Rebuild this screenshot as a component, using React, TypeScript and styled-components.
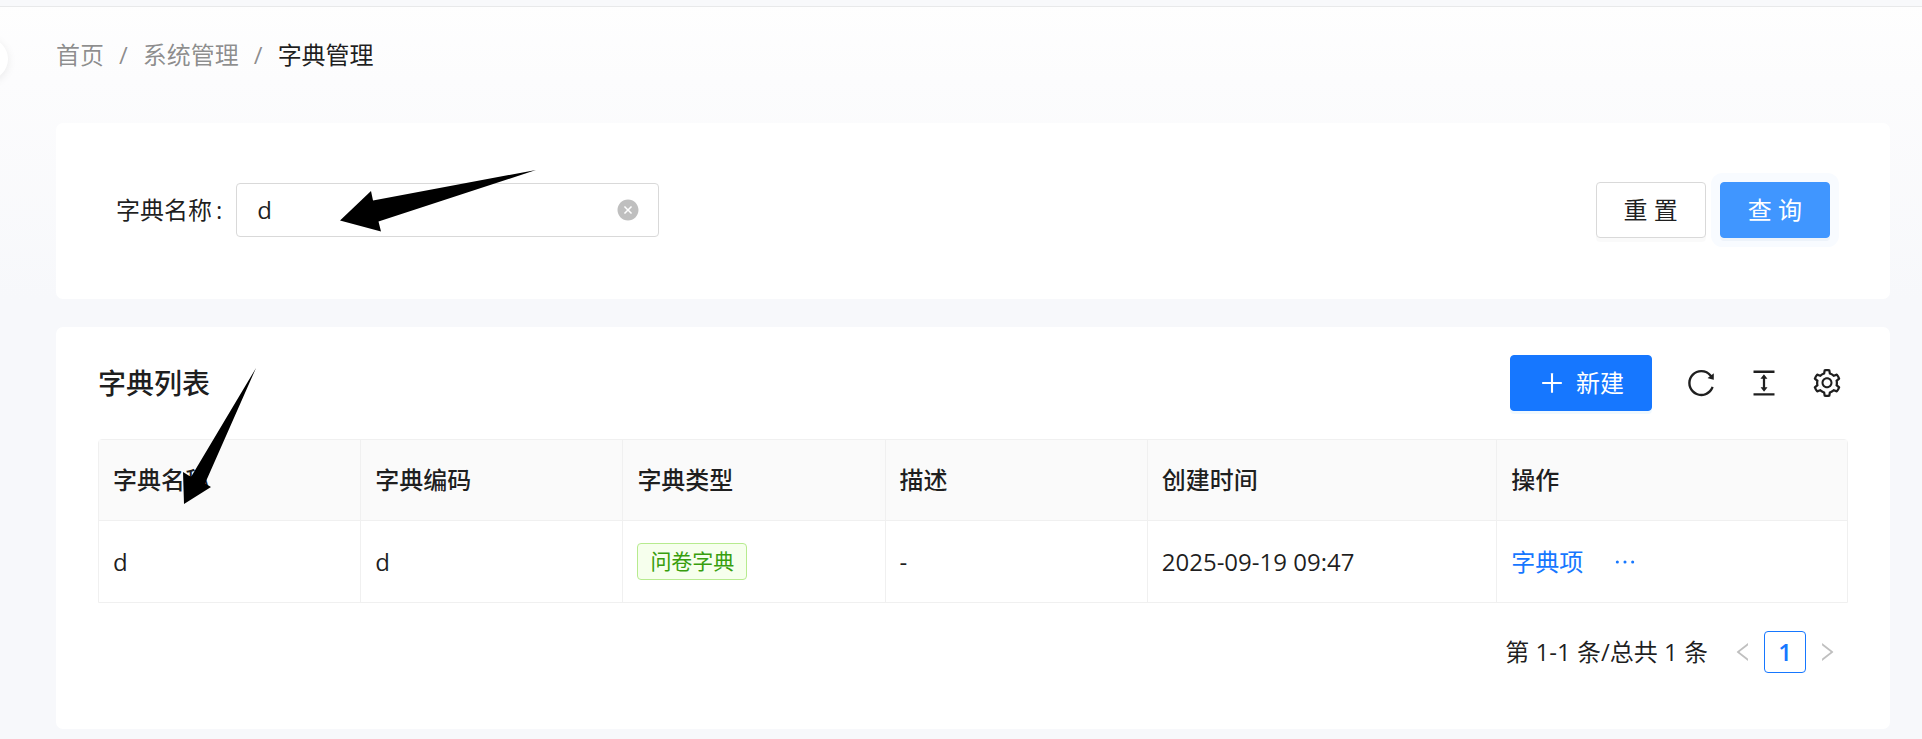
import React, { useState } from 'react';
import styled, { createGlobalStyle } from 'styled-components';
import {
  AiFillCloseCircle,
  AiOutlineColumnHeight,
  AiOutlineEllipsis,
  AiOutlineLeft,
  AiOutlinePlus,
  AiOutlineReload,
  AiOutlineRight,
  AiOutlineSetting,
} from 'react-icons/ai';

const GlobalStyle = createGlobalStyle`
  *, *::before, *::after { box-sizing: border-box; }
  body {
    margin: 0;
    background: #f7f8fb;
    color: rgba(0, 0, 0, 0.88);
    font-family: 'Open Sans', 'Noto Sans CJK SC', sans-serif;
    font-size: 24px;
    line-height: 38px;
  }
  button, input { font: inherit; color: inherit; }
  button { cursor: pointer; }
  a { text-decoration: none; }
`;

const Page = styled.div`
  position: relative;
  min-height: 100vh;
  overflow: hidden;
  background: linear-gradient(#fefefe, #fcfcfd 80px, #f7f8fb 300px);
`;

const TopBar = styled.header`
  height: 7px;
  background: #f8f9fb;
  border-bottom: 1px solid #e8e9ea;
`;

const SiderToggle = styled.button`
  position: absolute;
  top: 38px;
  left: -34px;
  width: 42px;
  height: 42px;
  padding: 0;
  border: 0;
  border-radius: 50%;
  background: #fff;
  box-shadow: 0 2px 10px rgba(0, 0, 0, 0.08);
`;

const Main = styled.main`
  display: flex;
  flex-direction: column;
  gap: 28px;
  padding: 29px 32px 10px 56px;
`;

const Breadcrumb = styled.nav`
  margin-bottom: 21px;

  ol {
    display: flex;
    margin: 0;
    padding: 0;
    list-style: none;
  }

  li + li::before {
    content: '/';
    margin: 0 15px;
    color: rgba(0, 0, 0, 0.45);
  }

  a {
    color: rgba(0, 0, 0, 0.45);
  }
`;

const Card = styled.section`
  position: relative;
  border-radius: 7px;
  background: #fff;
`;

const SearchForm = styled.form`
  display: flex;
  align-items: center;
  justify-content: space-between;
  gap: 28px;
  padding: 59px 60px 61px;
`;

const Field = styled.div`
  position: relative;
  display: flex;
  flex: 0 1 543px;
  align-items: center;
  min-width: 0;
`;

const FieldLabel = styled.label`
  flex: none;
  margin-right: 14px;

  &::after {
    content: ':';
    margin-left: 4px;
  }
`;

const InputBox = styled.div`
  display: flex;
  flex: 1;
  align-items: center;
  min-width: 0;
  height: 54px;
  padding: 0 18px 0 20px;
  border: 1px solid #d9d9d9;
  border-radius: 4px;
  background: #fff;
`;

const TextInput = styled.input`
  flex: 1;
  min-width: 0;
  padding: 0;
  border: 0;
  outline: 0;
  background: none;
`;

const PlainButton = styled.button`
  display: flex;
  align-items: center;
  justify-content: center;
  padding: 0;
  border: 0;
  background: none;
`;

const ClearButton = styled(PlainButton)`
  color: rgba(0, 0, 0, 0.25);
`;

const Actions = styled.div`
  display: flex;
  flex: none;
  gap: 14px;
`;

const Button = styled.button<{ $kind?: 'default' | 'primary' | 'active' }>`
  display: flex;
  align-items: center;
  justify-content: center;
  gap: 10px;
  height: 56px;
  padding: 0 27px;
  border: 1px solid
    ${({ $kind }) => ($kind === 'primary' ? '#1677ff' : $kind === 'active' ? '#4096ff' : '#d9d9d9')};
  border-radius: 4px;
  background: ${({ $kind }) => ($kind === 'primary' ? '#1677ff' : $kind === 'active' ? '#4096ff' : '#fff')};
  color: ${({ $kind }) => ($kind ? '#fff' : 'inherit')};
  box-shadow: ${({ $kind }) =>
    $kind === 'active'
      ? '0 3px 0 #edf3fa, 0 0 0 9px #f8fbff'
      : $kind === 'primary'
        ? '0 3px 0 rgba(5, 145, 255, 0.06)'
        : '0 4px 0 rgba(0, 0, 0, 0.02)'};
  white-space: pre;
`;

const ListCard = styled(Card)`
  padding: 28px 42px 56px;
`;

const Toolbar = styled.div`
  display: flex;
  align-items: center;
  justify-content: space-between;
  margin-bottom: 28px;
`;

const Title = styled.h2`
  margin: 0;
  font-size: 28px;
  font-weight: 500;
`;

const Tools = styled.div`
  display: flex;
  align-items: center;
  gap: 21px;
`;

const ToolButton = styled(PlainButton)`
  width: 42px;
  height: 42px;

  ${Button} + & {
    margin-left: 7px;
  }
`;

const Table = styled.table`
  width: 100%;
  border: 1px solid #f0f0f0;
  border-radius: 4px 4px 0 0;
  border-spacing: 0;
  table-layout: fixed;

  th,
  td {
    height: 81px;
    padding: 0 14px;
    border-right: 1px solid #f0f0f0;
    text-align: left;
  }

  th {
    border-bottom: 1px solid #f0f0f0;
    background: #fafafa;
    font-weight: 500;
  }

  th:last-child,
  td:last-child {
    border-right: 0;
  }
`;

const Col = styled.col<{ $share: number }>`
  width: ${({ $share }) => $share}%;
`;

const Tag = styled.span`
  display: block;
  width: fit-content;
  padding: 0 12px;
  border: 1px solid #b7eb8f;
  border-radius: 4px;
  background: #f6ffed;
  color: #389e0d;
  font-size: 21px;
  line-height: 35px;
`;

const RowActions = styled.div`
  display: flex;
  align-items: center;
  gap: 28px;
  color: #1677ff;

  a {
    color: inherit;
  }
`;

const Pagination = styled.nav`
  display: flex;
  align-items: center;
  justify-content: flex-end;
  margin-top: 28px;
`;

const Total = styled.span`
  margin-right: 14px;
`;

const PageButton = styled(PlainButton)<{ $current?: boolean }>`
  width: 42px;
  height: 42px;
  border: ${({ $current }) => ($current ? '1px solid #1677ff' : '0')};
  border-radius: 4px;
  color: ${({ $current }) => ($current ? '#1677ff' : 'rgba(0, 0, 0, 0.25)')};
  font-weight: 600;
`;

const Arrow = styled.svg<{ $top: number; $left: number }>`
  position: absolute;
  top: ${({ $top }) => $top}px;
  left: ${({ $left }) => $left}px;
  pointer-events: none;
`;

const columns = [
  { title: '字典名称', share: 15 },
  { title: '字典编码', share: 15 },
  { title: '字典类型', share: 15 },
  { title: '描述', share: 15 },
  { title: '创建时间', share: 20 },
  { title: '操作', share: 20 },
];

const rows = [{ name: 'd', code: 'd', type: '问卷字典', note: '-', created: '2025-09-19 09:47' }];

export default function App() {
  const [name, setName] = useState('d');

  return (
    <>
      <GlobalStyle />
      <Page>
        <TopBar />
        <SiderToggle type="button" aria-label="展开菜单" />
        <Main>
          <Breadcrumb>
            <ol>
              <li><a href="#home">首页</a></li>
              <li><a href="#system">系统管理</a></li>
              <li aria-current="page">字典管理</li>
            </ol>
          </Breadcrumb>

          <Card>
            <SearchForm onSubmit={(e) => e.preventDefault()}>
              <Field>
                <FieldLabel htmlFor="dict-name">字典名称</FieldLabel>
                <InputBox>
                  <TextInput id="dict-name" value={name} onChange={(e) => setName(e.target.value)} />
                  <ClearButton type="button" aria-label="清除" onClick={() => setName('')}>
                    <AiFillCloseCircle size={24} />
                  </ClearButton>
                </InputBox>
                <Arrow $top={-14} $left={223} width="200" height="64" aria-hidden="true">
                  <path d="M197 1 L34 31.5 L32 22 L1 51.5 L42 62.5 L39.5 52.5 Z" />
                </Arrow>
              </Field>
              <Actions>
                <Button type="button" onClick={() => setName('')}>重 置</Button>
                <Button type="submit" $kind="active">查 询</Button>
              </Actions>
            </SearchForm>
          </Card>

          <ListCard>
            <Toolbar>
              <Title>字典列表</Title>
              <Tools>
                <Button type="button" $kind="primary">
                  <AiOutlinePlus size={28} />
                  新建
                </Button>
                <ToolButton type="button" aria-label="刷新"><AiOutlineReload size={32} /></ToolButton>
                <ToolButton type="button" aria-label="密度"><AiOutlineColumnHeight size={32} /></ToolButton>
                <ToolButton type="button" aria-label="列设置"><AiOutlineSetting size={32} /></ToolButton>
              </Tools>
            </Toolbar>

            <Table>
              <colgroup>
                {columns.map((c) => <Col key={c.title} $share={c.share} />)}
              </colgroup>
              <thead>
                <tr>
                  {columns.map((c) => <th key={c.title} scope="col">{c.title}</th>)}
                </tr>
              </thead>
              <tbody>
                {rows.map((r) => (
                  <tr key={r.code}>
                    <td>{r.name}</td>
                    <td>{r.code}</td>
                    <td><Tag>{r.type}</Tag></td>
                    <td>{r.note}</td>
                    <td>{r.created}</td>
                    <td>
                      <RowActions>
                        <a href="#items">字典项</a>
                        <PlainButton type="button" aria-label="更多">
                          <AiOutlineEllipsis size={28} color="#1677ff" />
                        </PlainButton>
                      </RowActions>
                    </td>
                  </tr>
                ))}
              </tbody>
            </Table>

            <Pagination aria-label="分页">
              <Total>第 1-1 条/总共 1 条</Total>
              <PageButton type="button" aria-label="上一页" disabled><AiOutlineLeft size={24} /></PageButton>
              <PageButton type="button" $current aria-current="page">1</PageButton>
              <PageButton type="button" aria-label="下一页" disabled><AiOutlineRight size={24} /></PageButton>
            </Pagination>

            <Arrow $top={40} $left={126} width="76" height="138" aria-hidden="true">
              <path d="M74 1 L9 110 L1 105 L2 137 L29 120 L23 116.5 Z" />
            </Arrow>
          </ListCard>
        </Main>
      </Page>
    </>
  );
}
